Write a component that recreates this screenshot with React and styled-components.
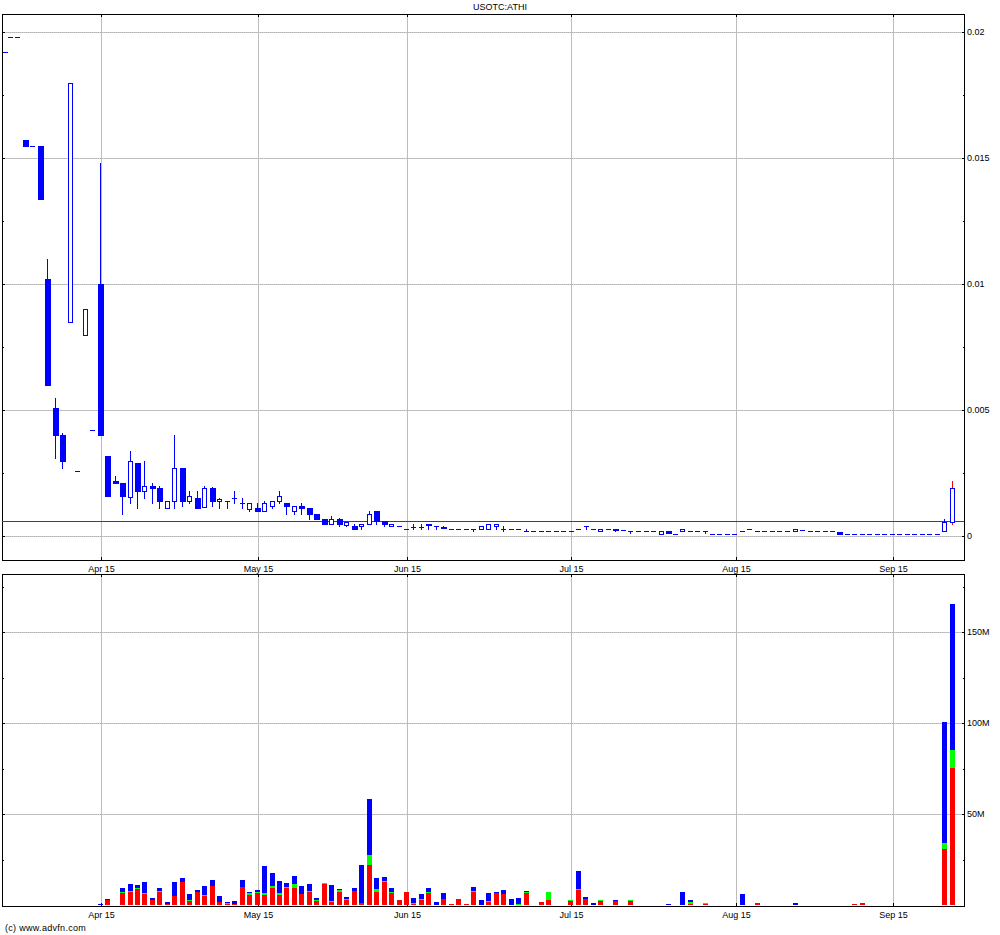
import React from "react";
import styled, { createGlobalStyle } from "styled-components";

const Global = createGlobalStyle`
  html, body { margin: 0; padding: 0; background: #fff; }
`;

const Page = styled.main`
  width: 1000px;
  height: 935px;
  display: flex;
  flex-direction: column;
  overflow: hidden;
  background: #fff;
  color: #000;
  font-family: "Liberation Sans", Arial, sans-serif;
  font-size: 9px;
`;

const Title = styled.h1`
  margin: 0;
  height: 14px;
  font: inherit;
  line-height: 15px;
  text-align: center;
`;

const Footer = styled.footer`
  height: 14px;
  padding-left: 5px;
  line-height: 14px;
  letter-spacing: 0.3px;
`;

const PanelSvg = styled.svg`
  display: block;
  flex: none;
  shape-rendering: crispEdges;
`;

const AxisText = styled.text`
  font-family: "Liberation Sans", Arial, sans-serif;
  font-size: 9px;
  fill: #000;
  text-anchor: ${(p) => (p.$centre ? "middle" : "start")};
`;

const L = 2, R = 964;
const COLS = [
  [101, "Apr 15"], [258, "May 15"], [407, "Jun 15"],
  [571, "Jul 15"], [736, "Aug 15"], [893, "Sep 15"],
];

// f = filled, h = hollow, d = dash (top is its row)
// [left, type, top, bottom, wickTop, wickBottom]
const d = (x, y) => [x, "d", y, y];
const many = (xs, y) => xs.map((x) => d(x, y));
const CANDLES = [
  [3, "d", 52, 52], d(8, 37), d(15, 37),
  [23, "f", 140, 147], d(30, 146), [38, "f", 146, 200],
  [45, "f", 279, 386, 259], [53, "f", 408, 436, 398, 459], [60, "f", 435, 462, 433, 469],
  [68, "h", 83, 322], d(75, 471), [83, "h", 309, 335], d(90, 430),
  [98, "f", 284, 436, 163], [105, "f", 456, 497], [113, "f", 481, 484, 476],
  [120, "f", 483, 497, 483, 515], [128, "h", 461, 497, 451, 504], [135, "f", 463, 492, 463, 509],
  [142, "h", 486, 491, 461, 499], [150, "f", 486, 489, 483, 504], [157, "f", 488, 502, 486, 509],
  [165, "h", 501, 508], [172, "h", 468, 501, 435, 509], [180, "f", 468, 502, 468, 507],
  [187, "h", 496, 501, 491, 504], [195, "f", 498, 509, 491], [202, "h", 488, 507, 486],
  [210, "f", 488, 502, 487, 507], [217, "h", 499, 501, 498, 509], [225, "d", 501, 501, 501, 509],
  [232, "d", 498, 498, 491, 504], [240, "d", 503, 503, 498, 509], [247, "h", 503, 509, 503, 512],
  [255, "f", 508, 512, 503], [262, "h", 503, 511, 501], [270, "h", 501, 506, 501, 509],
  [277, "h", 496, 501, 491, 504], [284, "f", 503, 507, 503, 515], [292, "h", 506, 511, 506, 515],
  [299, "f", 506, 509, 503, 515], [307, "f", 508, 515, 508, 520], [314, "f", 514, 520],
  [322, "f", 519, 525], [329, "h", 519, 524, 516], [337, "f", 519, 525, 518, 527],
  [344, "h", 522, 525, 522, 527], [352, "f", 526, 530, 524], [359, "h", 524, 526, 524, 530],
  [367, "h", 514, 524, 511], [374, "f", 511, 522, 511, 525], [382, "f", 521, 525, 521, 527],
  [389, "h", 524, 526], d(397, 526), d(404, 529),
  [411, "d", 527, 527, 524, 530], [419, "d", 527, 527, 524, 530], [426, "f", 524, 526, 524, 530],
  [434, "d", 526, 526, 526, 530], [441, "f", 527, 529, 526],
  ...many([449, 456, 464], 529), [471, "d", 529, 529, 529, 532],
  [479, "h", 526, 529], [486, "h", 524, 529], [494, "h", 524, 526, 524, 530],
  [501, "d", 529, 529, 526, 532], ...many([509, 516], 529), [524, "d", 531, 531, 529, 531],
  ...many([531, 539, 546, 554, 561, 569], 531), d(576, 529),
  [584, "d", 526, 526, 526, 530], d(591, 529), [598, "h", 529, 531], d(606, 529),
  [613, "f", 529, 531, 529, 532], d(621, 530), [628, "d", 531, 531, 531, 534],
  ...many([636, 644, 651], 531), [659, "h", 531, 534], [666, "f", 531, 534], d(673, 534),
  [680, "h", 529, 531], ...many([688, 695], 531), [703, "d", 531, 531, 531, 534],
  ...many([710, 717, 725, 732], 534), d(740, 531), d(747, 529),
  ...many([755, 762, 770, 777, 785], 531), [793, "h", 529, 531], d(800, 530),
  ...many([808, 815, 823, 830], 531), [837, "f", 532, 535],
  ...many([845, 852, 860, 867, 875, 882, 890, 897, 905, 912, 920, 927, 935], 534),
  [942, "h", 522, 531, 519],
];

const Candle = ({ c: [x, type, top, bot, wt, wb] }) => {
  const wickTop = wt ?? top;
  const wickBot = wb ?? bot;
  return (
    <g>
      {(wt !== undefined || wb !== undefined) && (
        <rect x={x + 2} y={wickTop} width="1" height={wickBot - wickTop} fill="#00f" />
      )}
      {type === "f" && <rect x={x} y={top} width="6" height={bot - top} fill="#00f" />}
      {type === "h" && (
        <rect x={x + 0.5} y={top + 0.5} width="4" height={bot - top} fill="#fff" stroke="#00f" />
      )}
      {type === "d" && <rect x={x} y={top} width="5" height="1" fill="#00f" />}
    </g>
  );
};

// [left, redTop, greenTop, blueTop]; a null means that segment is absent
const BARS = [
  [98, null, null, 904], [105, 900, null, 899], [120, 893, 892, 888], [128, 892, 891, 884],
  [135, 889, 888, 885], [142, 894, 893, 882], [150, 900, null, 898], [157, 892, 891, 888],
  [165, 904, null, 902], [172, 896, null, 882], [180, 882, null, 878], [187, 901, 900, 894],
  [195, 892, null, 890], [202, 896, 895, 886], [210, 886, null, 880], [217, 902, null, 896],
  [225, 904, 903, 902], [232, 904, null, 901], [240, 887, null, 880], [247, 895, 893, 892],
  [255, 893, 892, 890], [262, 895, 893, 866], [270, 888, 886, 873], [277, 895, 893, 881],
  [284, 888, 887, 883], [292, 888, 884, 876], [299, 894, null, 886], [307, 892, 891, 884],
  [314, 901, 900, 898], [322, 884, 883, null], [329, 902, 901, 885], [337, 892, 890, 889],
  [344, 900, 899, 897], [352, 891, null, 888], [359, 903, null, 865], [367, 865, 855, 799],
  [374, 892, 889, 878], [382, 882, 881, 877], [389, 893, 892, 888], [397, 900, null, null],
  [404, 892, null, null], [411, 904, 903, 898], [419, 900, 899, 894], [426, 893, 892, 888],
  [434, null, null, 902], [441, 899, null, 893], [449, 904, null, null], [456, 899, null, null],
  [464, 904, null, null], [471, 892, 891, 887], [479, null, null, 900], [486, 902, 901, 893],
  [494, 893, null, 892], [501, 894, null, 890], [509, null, null, 899], [516, null, 904, 898],
  [524, 893, 892, 891], [539, 902, null, null], [546, 900, 892, null], [568, 901, 900, null],
  [576, 890, 889, 871], [583, 899, null, 897], [591, null, null, 903], [598, 901, 900, null],
  [613, 901, null, 900], [628, 901, 900, null], [666, null, null, 904], [680, null, null, 892],
  [688, 904, 902, 900], [703, 904, 903, null], [740, null, null, 894], [755, 903, null, null],
  [793, null, null, 903], [852, 904, null, null], [860, 903, null, null],
  [942, 849, 843, 722], [950, 768, 750, 604],
];
const BASE = 905;

const VolumeBar = ({ b: [x, red, green, blue] }) => {
  const redEnd = red ?? BASE;
  const greenEnd = green ?? redEnd;
  return (
    <g>
      {blue !== null && <rect x={x} y={blue} width="5" height={greenEnd - blue} fill="#00f" />}
      {green !== null && <rect x={x} y={green} width="5" height={redEnd - green} fill="#0f0" />}
      {red !== null && <rect x={x} y={red} width="5" height={BASE - red} fill="#f00" />}
    </g>
  );
};

const HGrid = ({ y }) => (
  <g>
    <rect x={L} y={y} width={R - L} height="1" fill="#cdcdb6" />
    <line x1={L} x2={R} y1={y + 0.5} y2={y + 0.5} stroke="#b4b4b4" strokeDasharray="1 1" />
  </g>
);

const Frame = ({ top, bottom, majors, minors }) => (
  <g>
    {majors.map((y) => <HGrid key={y} y={y} />)}
    {COLS.map(([x]) => (
      <rect key={x} x={x} y={top} width="1" height={bottom - top} fill="#bcbcbc" />
    ))}
    <rect x={L} y={top} width={R - L + 1} height="1" fill="#000" />
    <rect x={L} y={bottom} width={R - L + 1} height="1" fill="#000" />
    <rect x={L} y={top} width="1" height={bottom - top + 1} fill="#000" />
    <rect x={R} y={top} width="1" height={bottom - top + 1} fill="#000" />
    {COLS.map(([x]) => (
      <g key={x}>
        <rect x={x} y={top} width="1" height="3" fill="#000" />
        <rect x={x} y={bottom - 3} width="1" height="3" fill="#000" />
      </g>
    ))}
    {majors.map((y) => (
      <g key={y}>
        <rect x={L} y={y} width="3" height="1" fill="#000" />
        <rect x={R - 2} y={y} width="2" height="1" fill="#000" />
      </g>
    ))}
    {minors.map((y) => (
      <g key={y}>
        <rect x={L} y={y} width="2" height="1" fill="#000" />
        <rect x={R - 1} y={y} width="1" height="1" fill="#000" />
      </g>
    ))}
  </g>
);

const DateLabels = ({ y }) =>
  COLS.map(([x, label]) => (
    <AxisText key={label} x={x + 0.5} y={y} $centre>{label}</AxisText>
  ));

const PRICE_LABELS = [[32, "0.02"], [158, "0.015"], [284, "0.01"], [410, "0.005"], [536, "0"]];
const VOL_LABELS = [[632, "150M"], [723, "100M"], [814, "50M"]];

export default function App() {
  return (
    <Page>
      <Global />
      <Title>USOTC:ATHI</Title>
      <PanelSvg width="1000" height="560" viewBox="0 14 1000 560">
        <Frame
          top={14}
          bottom={560}
          majors={PRICE_LABELS.map(([y]) => y)}
          minors={[95, 221, 347, 473]}
        />
        <rect x={L} y="521" width={R - L} height="1" fill="#e00000" />
        {CANDLES.map((c, i) => <Candle key={i} c={c} />)}
        <rect x="952" y="481" width="1" height="44" fill="#f00" />
        <rect x="950.5" y="488.5" width="4" height="34" fill="#fff" stroke="#00f" />
        {PRICE_LABELS.map(([y, t]) => <AxisText key={t} x="967" y={y + 2.5}>{t}</AxisText>)}
        <DateLabels y={572} />
      </PanelSvg>
      <PanelSvg width="1000" height="347" viewBox="0 574 1000 347">
        <Frame
          top={574}
          bottom={906}
          majors={VOL_LABELS.map(([y]) => y)}
          minors={[587, 678, 769, 860]}
        />
        {BARS.map((b) => <VolumeBar key={b[0]} b={b} />)}
        {VOL_LABELS.map(([y, t]) => <AxisText key={t} x="967" y={y + 2.5}>{t}</AxisText>)}
        <DateLabels y={918} />
      </PanelSvg>
      <Footer>(c) www.advfn.com</Footer>
    </Page>
  );
}
